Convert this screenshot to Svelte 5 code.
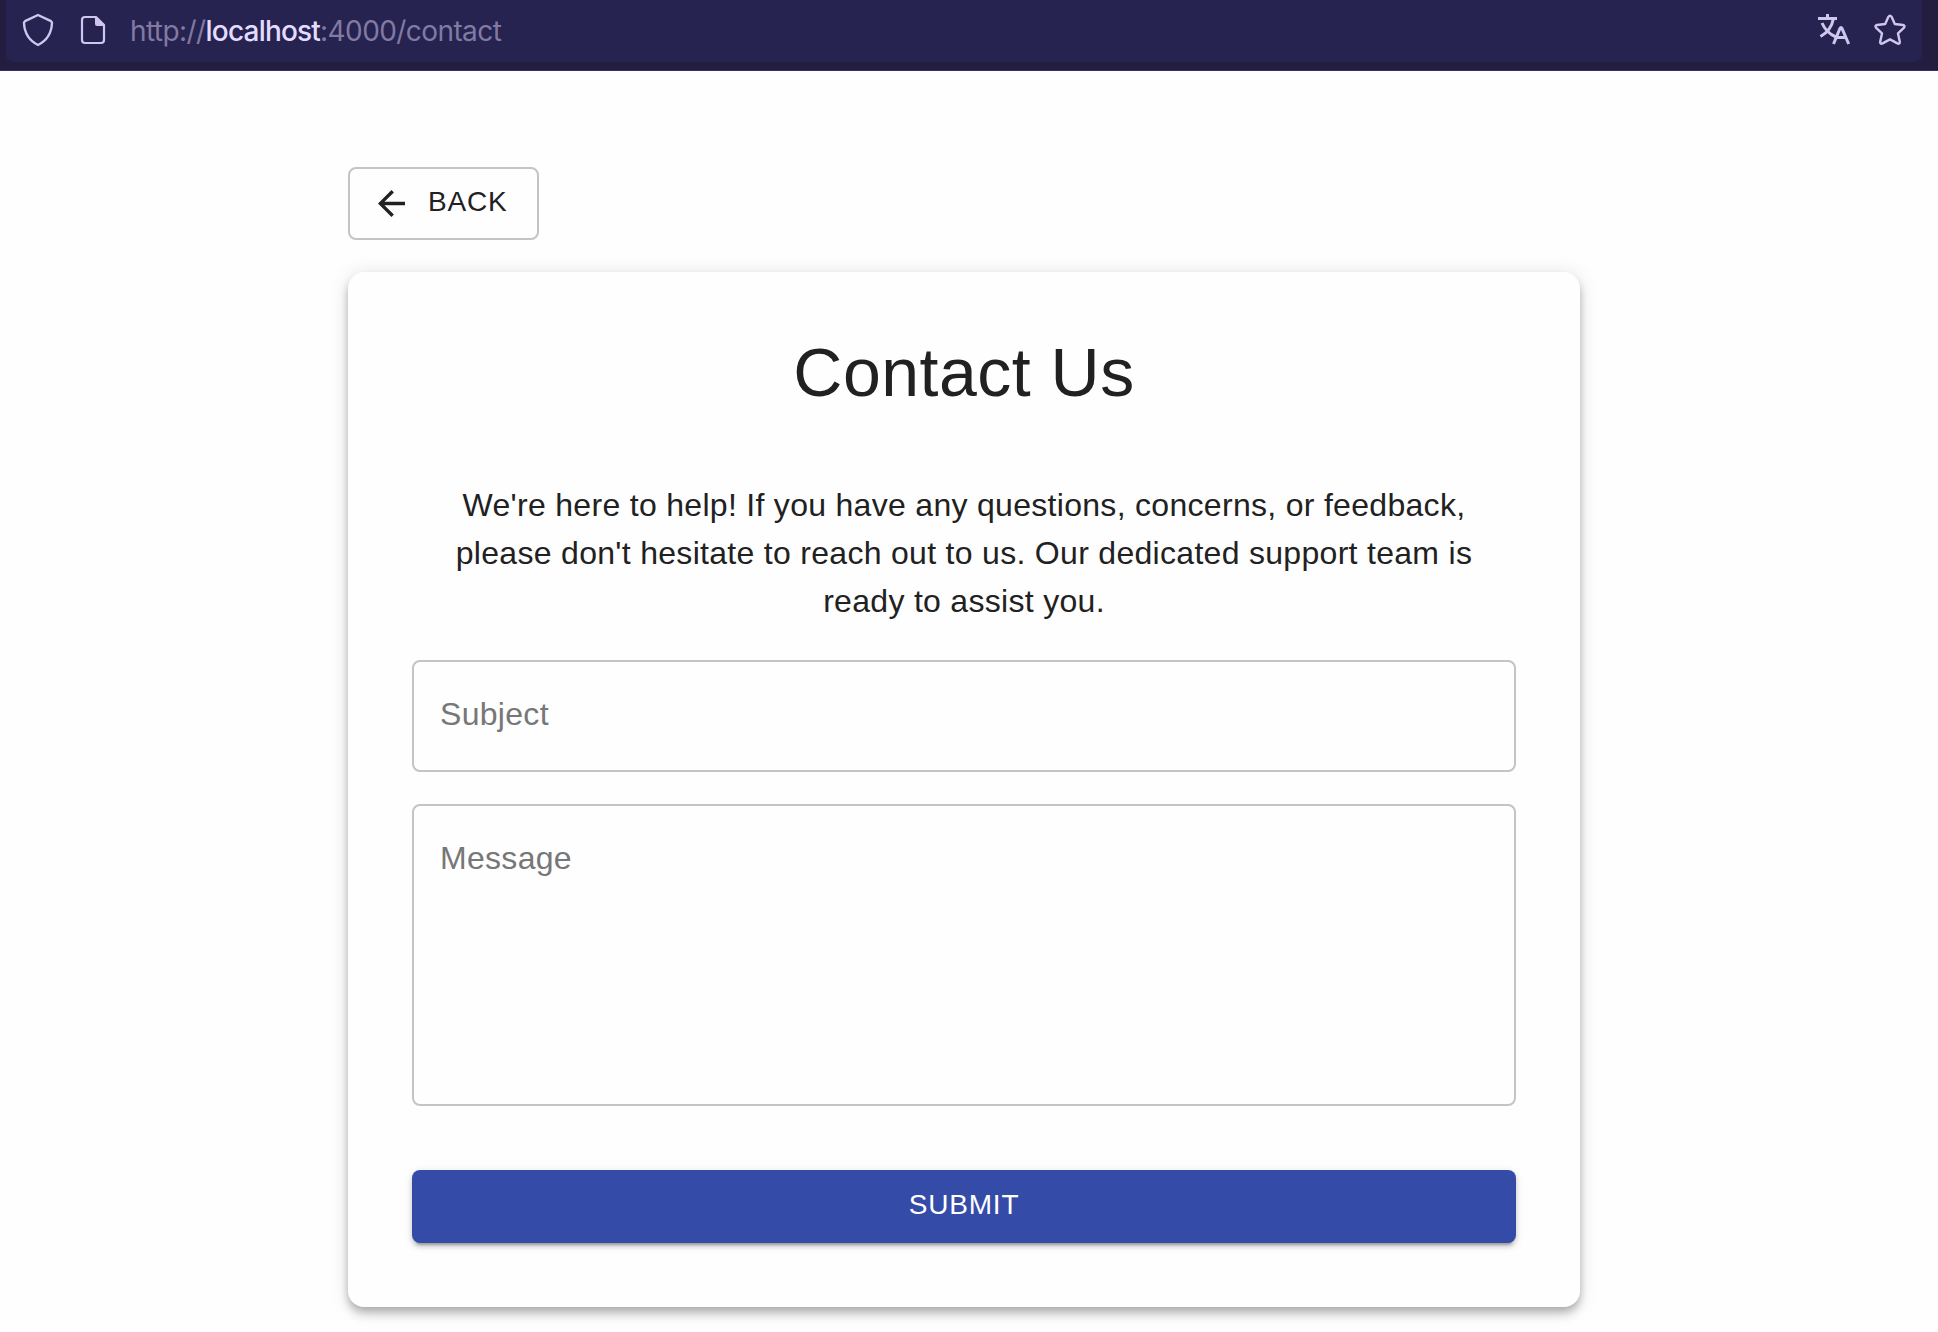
<script>
  let subject = $state('');
  let message = $state('');
</script>

<div class="browser-bar">
  <div class="address">
    <svg class="shield" viewBox="0 0 32 34" aria-hidden="true">
      <path d="M16 2 L29 8.2 Q30 8.8 30 10 C29.5 20 26 27 16 32 C6 27 2.5 20 2 10 Q2 8.8 3 8.2 Z" />
    </svg>
    <svg class="page-icon" viewBox="0 0 24 28" aria-hidden="true">
      <path d="M4 1 H15 L23 9 V24 Q23 27 20 27 H4 Q1 27 1 24 V4 Q1 1 4 1 Z" />
      <path class="fold" d="M14 1 H16 L23 8 V10 H16 Q14 10 14 8 Z" />
    </svg>
    <span class="url">http://<b>localhost</b>:4000/contact</span>
    <svg class="translate" viewBox="0 0 32 32" aria-hidden="true">
      <path d="M0 4.5 H19 M9.5 0 V4.5 M15.5 4.5 C14 12 9 19 2.5 22.5 M4 9 C7 16 12 20.5 18 23 M15.5 30 L22 14.5 Q23 12.5 24 14.5 L30.7 30 M18.5 23.5 H28" />
    </svg>
    <svg class="star" viewBox="0 0 32 32" aria-hidden="true">
      <path d="M14.4 2.8 Q16 0.4 17.6 2.8 L20.8 10 L29 11 Q31.6 11.8 29.8 13.9 L24 19.4 L25.8 27.8 Q26 30.4 23.4 29.4 L16 25.4 L8.6 29.4 Q6 30.4 6.2 27.8 L8 19.4 L2.2 13.9 Q0.4 11.8 3 11 L11.2 10 Z" />
    </svg>
  </div>
</div>

<main>
  <button class="back">
    <svg viewBox="4 4 16 16" aria-hidden="true">
      <path d="M20 11H7.83l5.59-5.59L12 4l-8 8 8 8 1.41-1.41L7.83 13H20v-2z" />
    </svg>
    <span>BACK</span>
  </button>

  <section class="card">
    <h1>Contact Us</h1>
    <p>
      We're here to help! If you have any questions, concerns, or feedback,<br />
      please don't hesitate to reach out to us. Our dedicated support team is<br />
      ready to assist you.
    </p>
    <input type="text" placeholder="Subject" bind:value={subject} />
    <textarea placeholder="Message" bind:value={message}></textarea>
    <button class="submit">SUBMIT</button>
  </section>
</main>

<style>
  :global(body) {
    background: #fefefe;
  }
  * {
    box-sizing: border-box;
  }
  .browser-bar {
    height: 71px;
    padding: 0 16px 0 6px;
    background: #231e40;
    border-bottom: 1px solid #352c70;
  }
  .address {
    display: flex;
    align-items: flex-start;
    height: 62px;
    padding: 0 16px;
    background: #262350;
    border-radius: 0 0 8px 8px;
  }
  .address svg {
    flex: none;
    fill: none;
    stroke: #cfc6ee;
    stroke-width: 2.4;
    stroke-linejoin: round;
    overflow: visible;
  }
  .address .shield {
    width: 32px;
    height: 34px;
    margin-top: 13px;
  }
  .address .page-icon {
    width: 24px;
    height: 28px;
    margin: 16px 0 0 27px;
    stroke-width: 2.2;
  }
  .address .page-icon .fold {
    fill: #cfc6ee;
    stroke: none;
  }
  .url {
    flex: 1;
    margin-left: 25px;
    font: 28px/62px Inter, 'Liberation Sans', sans-serif;
    letter-spacing: -0.58px;
    color: #817aa3;
    white-space: nowrap;
  }
  .url b {
    font-weight: 500;
    letter-spacing: -0.8px;
    color: #e3dcff;
  }
  .address .translate {
    width: 32px;
    height: 32px;
    margin: 14px 24px 0 0;
    stroke-width: 3;
    stroke-linejoin: miter;
  }
  .address .star {
    width: 32px;
    height: 32px;
    margin-top: 14px;
  }
  main {
    width: 1232px;
    margin: 0 0 0 348px;
    padding: 96px 0 25px;
    font-family: 'Liberation Sans', Arial, sans-serif;
    color: #212121;
  }
  .back {
    display: flex;
    align-items: center;
    gap: 23px;
    width: 191px;
    height: 73px;
    padding: 0 0 0 28px;
    border: 2px solid #c4c4c4;
    border-radius: 8px;
    background: transparent;
    color: inherit;
    font: 28px/49px 'Liberation Sans', Arial, sans-serif;
    letter-spacing: 0.8px;
  }
  .back svg {
    width: 27px;
    height: 27px;
    fill: #212121;
  }
  .back span {
    padding-bottom: 4px;
  }
  .card {
    display: flex;
    flex-direction: column;
    height: 1035px;
    margin-top: 32px;
    padding: 64px;
    border-radius: 16px;
    background: #fefefe;
    box-shadow:
      0 4px 8px -2px rgba(0, 0, 0, 0.2),
      0 8px 10px 0 rgba(0, 0, 0, 0.14),
      0 2px 20px 0 rgba(0, 0, 0, 0.12);
  }
  h1 {
    margin: 0;
    font-size: 68px;
    line-height: 72px;
    font-weight: 400;
    letter-spacing: 0.5px;
    text-align: center;
  }
  p {
    margin: 73px 0 32px;
    height: 147px;
    font-size: 32px;
    line-height: 48px;
    letter-spacing: 0.3px;
    text-align: center;
    white-space: nowrap;
  }
  input,
  textarea {
    width: 100%;
    margin: 0;
    border: 2px solid #c4c4c4;
    border-radius: 8px;
    outline: none;
    background: transparent;
    color: inherit;
    font: 32px/38px 'Liberation Sans', Arial, sans-serif;
    letter-spacing: 0.3px;
  }
  input {
    height: 112px;
    padding: 33px 26px 37px;
  }
  textarea {
    height: 302px;
    margin-top: 32px;
    padding: 33px 26px;
    resize: none;
  }
  ::placeholder {
    color: #777;
    opacity: 1;
  }
  .submit {
    height: 73px;
    margin-top: 64px;
    padding: 0 0 5px;
    border: 0;
    border-radius: 8px;
    background: #344ba8;
    color: #fff;
    font: 28px/49px 'Liberation Sans', Arial, sans-serif;
    letter-spacing: 0.8px;
    box-shadow:
      0 6px 2px -4px rgba(0, 0, 0, 0.2),
      0 4px 4px 0 rgba(0, 0, 0, 0.14),
      0 2px 10px 0 rgba(0, 0, 0, 0.12);
  }
</style>
